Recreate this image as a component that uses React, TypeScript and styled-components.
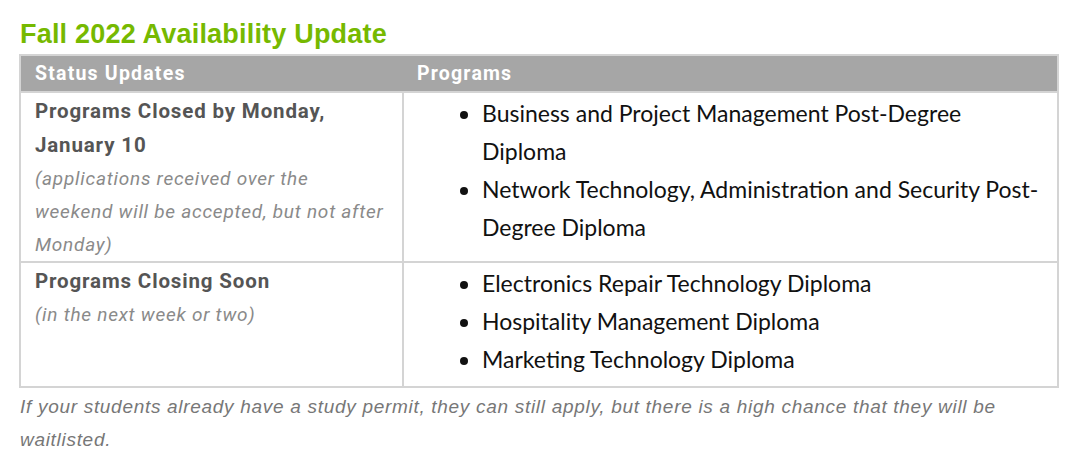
import React from "react";
import styled, { createGlobalStyle } from "styled-components";

const Global = createGlobalStyle`
  html, body { margin: 0; padding: 0; background: #fff; }
  body { font-family: Roboto, "Liberation Sans", sans-serif; }
`;

const Page = styled.div`
  padding: 17px 20px 0 19px;
  width: 1040px;
`;

const Title = styled.h2`
  margin: 0 0 3px 1px;
  font-family: "Liberation Sans", Arial, sans-serif;
  font-weight: 700;
  font-size: 27px;
  letter-spacing: 0.2px;
  line-height: 34px;
  color: #76b900;
`;

const Table = styled.table`
  width: 1040px;
  border-collapse: collapse;
  border: 2px solid #d4d4d4;
  table-layout: fixed;
`;

const HeadCell = styled.th<{ $w?: string }>`
  background: #a6a6a6;
  color: #fff;
  font-family: Roboto, sans-serif;
  font-weight: 700;
  font-size: 19.5px;
  letter-spacing: 1.2px;
  line-height: 24px;
  text-align: left;
  padding: 6px 14px 5px 14px;
  width: ${(p) => p.$w || "auto"};
  border: none;
`;

const Cell = styled.td`
  border: 2px solid #d4d4d4;
  vertical-align: top;
  padding: 1px 14px 0 14px;
`;

const Strong = styled.div`
  font-family: Roboto, sans-serif;
  font-weight: 700;
  font-size: 20.5px;
  letter-spacing: 0.85px;
  line-height: 34px;
  color: #555;
`;

const Note = styled.div`
  font-family: Roboto, sans-serif;
  font-style: italic;
  font-size: 19px;
  letter-spacing: 0.75px;
  line-height: 33px;
  color: #8a8a8a;
`;

const List = styled.ul`
  margin: 0 0 8px 0;
  padding: 0 0 0 64px;
  font-family: Lato, "Open Sans", sans-serif;
  font-size: 23px;
  line-height: 38px;
  color: #111;
`;

const Footer = styled.p`
  margin: 2px 0 0 1px;
  font-family: "Liberation Sans", Arial, sans-serif;
  font-style: italic;
  font-size: 19px;
  letter-spacing: 0.7px;
  line-height: 33px;
  color: #777;
`;

const rows = [
  {
    title: "Programs Closed by Monday, January 10",
    note: "(applications received over the weekend will be accepted, but not after Monday)",
    items: [
      "Business and Project Management Post-Degree Diploma",
      "Network Technology, Administration and Security Post-Degree Diploma",
    ],
  },
  {
    title: "Programs Closing Soon",
    note: "(in the next week or two)",
    items: [
      "Electronics Repair Technology Diploma",
      "Hospitality Management Diploma",
      "Marketing Technology Diploma",
    ],
  },
];

export default function App() {
  return (
    <>
      <Global />
      <Page>
        <Title>Fall 2022 Availability Update</Title>
        <Table>
          <thead>
            <tr>
              <HeadCell $w="354px">Status Updates</HeadCell>
              <HeadCell>Programs</HeadCell>
            </tr>
          </thead>
          <tbody>
            {rows.map((r) => (
              <tr key={r.title}>
                <Cell>
                  <Strong>{r.title}</Strong>
                  <Note>{r.note}</Note>
                </Cell>
                <Cell>
                  <List>
                    {r.items.map((i) => (
                      <li key={i}>{i}</li>
                    ))}
                  </List>
                </Cell>
              </tr>
            ))}
          </tbody>
        </Table>
        <Footer>
          If your students already have a study permit, they can still apply, but there is a high chance that they will be waitlisted.
        </Footer>
      </Page>
    </>
  );
}
